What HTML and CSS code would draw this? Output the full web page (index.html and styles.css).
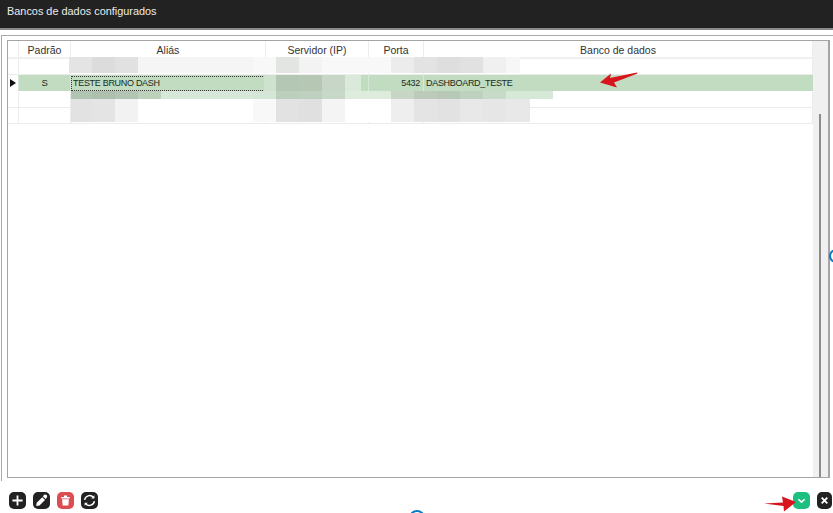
FILE: index.html
```html
<!DOCTYPE html>
<html lang="pt">
<head>
<meta charset="utf-8">
<title>Bancos de dados configurados</title>
<link rel="stylesheet" href="styles.css">
</head>
<body>
<header class="titlebar">Bancos de dados configurados</header>
<main class="panel">
  <section class="frame">
    <div class="grid">
      <div class="row head">
        <div class="cell ind"></div>
        <div class="cell center">Padrão</div>
        <div class="cell center">Aliás</div>
        <div class="cell center">Servidor (IP)</div>
        <div class="cell center">Porta</div>
        <div class="cell center">Banco de dados</div>
      </div>
      <div class="row">
        <div class="cell ind"></div><div class="cell"></div><div class="cell"></div><div class="cell"></div><div class="cell"></div><div class="cell"></div>
      </div>
      <div class="row selected">
        <div class="cell ind"><span class="caret"></span></div>
        <div class="cell center">S</div>
        <div class="cell focus">TESTE BRUNO DASH</div>
        <div class="cell"></div>
        <div class="cell right">5432</div>
        <div class="cell name">DASHBOARD_TESTE</div>
      </div>
      <div class="row">
        <div class="cell ind"></div><div class="cell"></div><div class="cell"></div><div class="cell"></div><div class="cell"></div><div class="cell"></div>
      </div>
      <div class="row">
        <div class="cell ind"></div><div class="cell"></div><div class="cell"></div><div class="cell"></div><div class="cell"></div><div class="cell"></div>
      </div>
    </div>
    <div class="scrollbar"><span class="thumb"></span></div>
    <div class="blur blur-a"></div>
    <div class="blur blur-s"></div>
    <div class="blur blur-b"></div>
    <div class="blur blur-c"></div>
  </section>
</main>
<footer class="toolbar">
  <div class="btns">
    <button class="btn dark" aria-label="Adicionar"><svg viewBox="0 0 16 16"><path d="M8 3.200v9.600M3.200 8h9.600" stroke="#fff" stroke-width="1.700" fill="none"/></svg></button>
    <button class="btn dark" aria-label="Editar"><svg viewBox="0 0 16 16"><path d="M3 13.200l.5-3 5.200-5.200 2.600 2.600-5.200 5.200z" fill="#fff"/><path d="M9.200 4l1.200-1.200c.7-.6 1.700-.6 2.400.1s.7 1.700.1 2.400l-1.200 1.200z" fill="#fff"/></svg></button>
    <button class="btn red" aria-label="Excluir"><svg viewBox="0 0 16 16"><path d="M4 4.600h8v1.400H4zM6.600 3.400h2.800v1.200H6.600zM4.800 6.800h6.400l-.5 5.800H5.300z" fill="#fff"/></svg></button>
    <button class="btn dark" aria-label="Atualizar"><svg viewBox="0 0 16 16"><path d="M3.400 7.400A4.700 4.700 0 0 1 11.600 5M12.600 8.600A4.700 4.700 0 0 1 4.400 11" stroke="#fff" stroke-width="1.300" fill="none"/><path d="M12.600 3v3H9.600zM3.400 13v-3h3z" fill="#fff"/></svg></button>
  </div>
  <div class="btns end">
    <button class="btn green" aria-label="Confirmar"><svg viewBox="0 0 16 16"><path d="M5 6.800l3 2.800 3-2.800" stroke="#fff" stroke-width="1.500" fill="none"/></svg></button>
    <button class="btn dark small" aria-label="Fechar"><svg viewBox="0 0 16 16"><path d="M5 5l6 6M11 5l-6 6" stroke="#fff" stroke-width="2" fill="none"/></svg></button>
  </div>
</footer>
<svg class="arrow arrow-top" viewBox="0 0 38 18"><path d="M0 10.500L11 1.500L10 6L37 0.500L37.500 1.500L14 10.500L17 15.500Z" fill="#d8141c"/></svg>
<svg class="arrow arrow-bottom" viewBox="0 0 33 18"><path d="M0 8.500L19 7.500L18 1.500L32 7L20 16.500L19.500 11Z" fill="#d8141c"/></svg>
<span class="spinner spinner-right"></span>
<span class="spinner spinner-bottom"></span>
</body>
</html>
```
FILE: styles.css
```css
* { box-sizing: border-box; }
html, body { margin: 0; height: 513px; overflow: hidden; }
body {
  position: relative;
  display: flex;
  flex-direction: column;
  background: #fff;
  font-family: "Liberation Sans", Arial, sans-serif;
  font-size: 10px;
  color: #222;
}
.titlebar {
  height: 30px;
  flex: none;
  padding: 4px 0 0 7px;
  background: #222;
  border-bottom: 2px solid #8a8a8a;
  color: #ececec;
  font-size: 10.900px;
  line-height: 15px;
}
.panel {
  flex: none;
  height: 446px;
  margin: 5px 0 0 1px;
  padding: 4px 3px 3px 5px;
  border-top: 1px solid #aaa;
  border-left: 1px solid #aaa;
}
.frame {
  position: relative;
  height: 100%;
  border: 1px solid #a4a4a4;
  border-width: 1px 2px 1px 1px;
  display: flex;
}
.grid { flex: 1; }
.row {
  display: grid;
  grid-template-columns: 11px 52px 195px 103px 55px 1fr;
  height: 16px;
  border-bottom: 1px solid #ececec;
}
.row.head { height: 18px; border-bottom: 2px solid #f0f0f0; color: #333; font-size: 10.500px; }
.cell {
  line-height: 15px;
  padding: 0 3px;
  border-right: 1px solid #ececec;
  white-space: nowrap;
  overflow: hidden;
}
.row.head .cell { line-height: 18px; }
.center { text-align: center; }
.right { text-align: right; }
.ind { padding: 0; background: #fff; display: flex; align-items: center; justify-content: center; }
.selected { background: #c1dcc1; border-bottom-color: #fff; height: 17px; color: #1c2a1c; font-size: 9px; letter-spacing: -.3px; }
.selected .cell { border-right-color: #d8e8d8; line-height: 16px; }
.selected .cell.center { font-size: 9.500px; }
.selected .cell:last-child { border-right: 0; }
.selected .name { padding-left: 2px; }
.focus { border: 1px dotted #333; padding: 0 1px; line-height: 13px !important; height: 15px; margin: 1px 1px 0 0; }
.selected .focus { border-right: 1px dotted #333; }
.caret {
  width: 0;
  height: 0;
  border-left: 6px solid #111;
  border-top: 4.500px solid transparent;
  border-bottom: 4.500px solid transparent;
}
.scrollbar {
  position: relative;
  flex: none;
  width: 15px;
  background: #f0f0f0;
}
.thumb {
  position: absolute;
  left: 6px;
  top: 73px;
  bottom: 0;
  width: 2px;
  background: #8c8c8c;
}
.blur { position: absolute; filter: blur(.4px); }
.blur-a {
  left: 61px;
  top: 16px;
  width: 451px;
  height: 16px;
  background: linear-gradient(to right,
    #e3e4e3 0 23px, #dcdcdc 0 46px, #e1e1e1 0 69px, #f5f5f5 0 184px, #f8f8f8 0 207px,
    #e3e5e3 0 230px, #f3f3f3 0 253px, #f8f8f8 0 322px, #ececec 0 345px, #e3e3e3 0 368px,
    #dedede 0 391px, #e1e1e1 0 414px, #f0f0f0 0 437px, #f7f7f7 0 451px);
}
.blur-s {
  left: 256px;
  top: 34px;
  width: 104px;
  height: 16px;
  background: linear-gradient(to right,
    #cfe2cf 0 12px, #b4c6b4 0 35px, #b6c8b4 0 58px, #c8d6c8 0 81px, #daeada 0 97px, #c1dcc1 0 104px);
}
.blur-b {
  left: 63px;
  top: 50px;
  width: 482px;
  height: 8px;
  background: linear-gradient(to right,
    #b0c4b2 0 21px, #aebfae 0 44px, #b4c4b4 0 67px, #bcd0bc 0 90px, #d8e8d8 0 182px, #d6e6d6 0 205px,
    #bccfbc 0 228px, #c0d0c0 0 251px, #c8d8c8 0 274px, #ddecdd 0 320px, #c8d6c8 0 343px, #bccabc 0 366px,
    #b8c8b8 0 389px, #c0d0c0 0 412px, #cadaca 0 435px, #d8e8d8 0 482px);
}
.blur-c {
  left: 63px;
  top: 58px;
  width: 459px;
  height: 23px;
  background: linear-gradient(to right,
    #e2e2e2 0 21px, #e4e4e4 0 44px, #f2f2f2 0 67px, #fff 0 182px, #f8f8f8 0 205px, #e2e2e2 0 228px,
    #e0e0e0 0 251px, #f4f4f4 0 274px, #fff 0 320px, #eeeeee 0 343px, #e4e4e4 0 366px, #e2e2e2 0 389px,
    #e8e8e8 0 412px, #e6e6e6 0 435px, #e8e8e8 0 459px);
}
.toolbar {
  flex: none;
  display: flex;
  justify-content: space-between;
  padding: 11px 1px 0 9px;
}
.btns { display: flex; gap: 7px; }
.btn {
  width: 17px;
  height: 17px;
  padding: 0;
  border: 0;
  border-radius: 5px;
  display: block;
}
.btn svg { display: block; width: 100%; height: 100%; }
.dark { background: #222; }
.red { background: #dc4c50; }
.green { background: #1cbf80; }
.small { width: 15px; }
.arrow { position: absolute; }
.arrow-top { left: 600px; top: 72px; width: 38px; height: 18px; }
.arrow-bottom { left: 764px; top: 495px; width: 33px; height: 18px; }
.spinner { position: absolute; border: 2px solid #0a7bc4; border-radius: 50%; }
.spinner-right { left: 829px; top: 249px; width: 14px; height: 14px; }
.spinner-bottom { left: 409px; top: 510px; width: 16px; height: 16px; }
```
